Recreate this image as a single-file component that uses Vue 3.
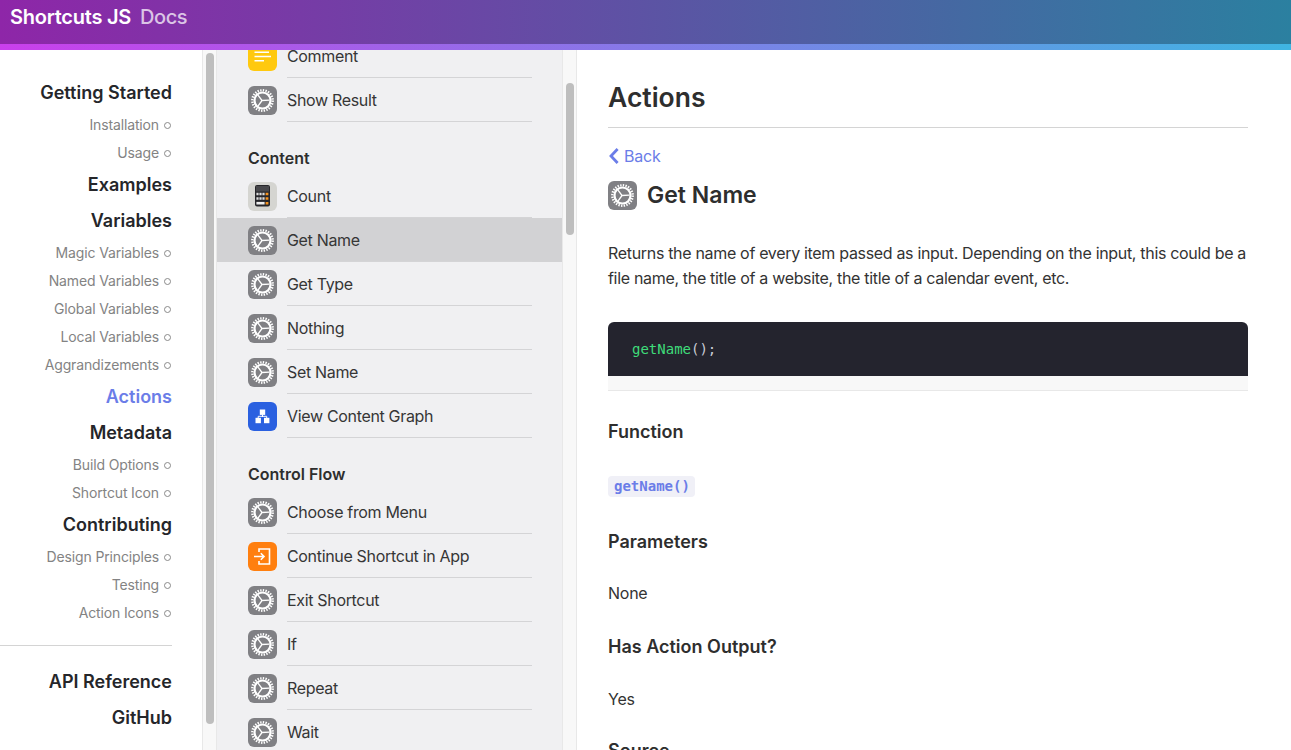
<script setup>
const top = [
  { name: 'Comment', icon: 'comment' },
  { name: 'Show Result', icon: 'gear' }
]
const groups = [
  { title: 'Content', items: [
    { name: 'Count', icon: 'calc' },
    { name: 'Get Name', icon: 'gear', active: true },
    { name: 'Get Type', icon: 'gear' },
    { name: 'Nothing', icon: 'gear' },
    { name: 'Set Name', icon: 'gear' },
    { name: 'View Content Graph', icon: 'graph' }
  ] },
  { title: 'Control Flow', items: [
    { name: 'Choose from Menu', icon: 'gear' },
    { name: 'Continue Shortcut in App', icon: 'exit' },
    { name: 'Exit Shortcut', icon: 'gear' },
    { name: 'If', icon: 'gear' },
    { name: 'Repeat', icon: 'gear' },
    { name: 'Wait', icon: 'gear' }
  ] }
]
const nav = [
  { head: 'Getting Started', subs: ['Installation', 'Usage'] },
  { head: 'Examples', subs: [] },
  { head: 'Variables', subs: ['Magic Variables', 'Named Variables', 'Global Variables', 'Local Variables', 'Aggrandizements'] },
  { head: 'Actions', subs: [], active: true },
  { head: 'Metadata', subs: ['Build Options', 'Shortcut Icon'] },
  { head: 'Contributing', subs: ['Design Principles', 'Testing', 'Action Icons'] }
]
const spokes = 'M21.5 14.2L14 14.5L9.8 8.8M14 14.5L9.8 20.4'
</script>

<template>
  <div class="page">
    <header class="bar">
      <span class="brand">Shortcuts JS</span>
      <span class="docs">Docs</span>
    </header>
    <div class="cols">
      <aside class="side">
        <nav class="nav">
          <div v-for="g in nav" :key="g.head" class="nav-group">
            <a class="nav-head" :class="{ on: g.active }">{{ g.head }}</a>
            <ul v-if="g.subs.length" class="subs">
              <li v-for="s in g.subs" :key="s" class="sub">{{ s }}<i class="ring"></i></li>
            </ul>
          </div>
          <hr class="nav-rule" />
          <a class="nav-head">API Reference</a>
          <a class="nav-head">GitHub</a>
        </nav>
      </aside>
      <div class="track"><div class="thumb thumb-a"></div></div>
      <section class="list">
        <div class="list-inner">
          <div v-for="it in top" :key="it.name" class="row">
            <svg class="ico" viewBox="0 0 29 29">
              <template v-if="it.icon === 'comment'">
                <rect width="29" height="29" rx="6" fill="#ffc90f" />
                <path d="M6.5 10.3H21M6.5 14.5H23M6.5 18.7H16" stroke="#fff" stroke-width="1.6" fill="none" />
              </template>
              <template v-else>
                <rect width="29" height="29" rx="6" fill="#808084" />
                <circle cx="14.5" cy="14.5" r="10.2" fill="none" stroke="#fff" stroke-width="2.4" stroke-dasharray="1.4 1.27" />
                <circle cx="14.5" cy="14.5" r="8" fill="none" stroke="#fff" stroke-width="2.2" />
                <path :d="spokes" stroke="#fff" stroke-width="1.3" fill="none" />
              </template>
            </svg>
            <span class="row-label">{{ it.name }}</span>
          </div>
          <div v-for="g in groups" :key="g.title" class="group">
            <h4 class="group-title">{{ g.title }}</h4>
            <div v-for="it in g.items" :key="it.name" class="row" :class="{ sel: it.active }">
              <svg class="ico" viewBox="0 0 29 29">
                <template v-if="it.icon === 'gear'">
                  <rect width="29" height="29" rx="6" fill="#808084" />
                  <circle cx="14.5" cy="14.5" r="10.2" fill="none" stroke="#fff" stroke-width="2.4" stroke-dasharray="1.4 1.27" />
                  <circle cx="14.5" cy="14.5" r="8" fill="none" stroke="#fff" stroke-width="2.2" />
                  <path :d="spokes" stroke="#fff" stroke-width="1.3" fill="none" />
                </template>
                <template v-else-if="it.icon === 'calc'">
                  <rect width="29" height="29" rx="6" fill="#d5d5d1" />
                  <rect x="7" y="3" width="15" height="21.5" rx="2" fill="#26262a" />
                  <rect x="8" y="4" width="13" height="5.5" fill="#46464a" />
                  <path d="M8.4 12h2.2M11.4 12h2.2M14.4 12h2.2M8.4 16.5h2.2M11.4 16.5h2.2M14.4 16.5h2.2" stroke="#ddd" stroke-width="2.6" />
                  <path d="M8.4 21.2h8.2" stroke="#f0f0f0" stroke-width="2.6" />
                  <path d="M17.6 12h2.8M17.6 16.5h2.8M17.6 21.2h2.8" stroke="#f5921e" stroke-width="2.6" />
                </template>
                <template v-else-if="it.icon === 'graph'">
                  <rect width="29" height="29" rx="6" fill="#2a60e0" />
                  <rect x="11.8" y="7.5" width="5.4" height="5.4" fill="#fff" />
                  <rect x="7.5" y="15.8" width="5.4" height="5.4" fill="#fff" />
                  <rect x="16" y="15.8" width="5.4" height="5.4" fill="#fff" />
                  <path d="M14.5 12.5V15M10.2 16V14.3H18.7V16" stroke="#fff" stroke-width="1" fill="none" />
                </template>
                <template v-else>
                  <rect width="29" height="29" rx="6" fill="#ff7f0f" />
                  <path d="M11 10V7H21.5V22H11V19" stroke="#fff" stroke-width="1.6" fill="none" />
                  <path d="M6 14.5H16M12.8 11.3L16 14.5L12.8 17.7" stroke="#fff" stroke-width="1.6" fill="none" />
                </template>
              </svg>
              <span class="row-label">{{ it.name }}</span>
            </div>
          </div>
        </div>
      </section>
      <div class="track"><div class="thumb thumb-b"></div></div>
      <main class="main">
        <h1 class="title">Actions</h1>
        <a class="back">
          <svg class="chev" viewBox="0 0 12 18"><path d="M9.6 2L3 9L9.6 16" fill="none" stroke="#6b7de8" stroke-width="2.8" /></svg>
          Back
        </a>
        <div class="name">
          <svg class="ico" viewBox="0 0 29 29">
            <rect width="29" height="29" rx="6" fill="#808084" />
            <circle cx="14.5" cy="14.5" r="10.2" fill="none" stroke="#fff" stroke-width="2.4" stroke-dasharray="1.4 1.27" />
            <circle cx="14.5" cy="14.5" r="8" fill="none" stroke="#fff" stroke-width="2.2" />
            <path :d="spokes" stroke="#fff" stroke-width="1.3" fill="none" />
          </svg>
          <h2 class="name-text">Get Name</h2>
        </div>
        <p class="desc">Returns the name of every item passed as input. Depending on the input, this could be a file name, the title of a website, the title of a calendar event, etc.</p>
        <div class="code"><pre class="pre"><span class="fn">getName</span>();</pre></div>
        <div class="code-scroll"></div>
        <h3 class="h3 h-fn">Function</h3>
        <code class="sig">getName()</code>
        <h3 class="h3 h-par">Parameters</h3>
        <p class="val v-none">None</p>
        <h3 class="h3 h-out">Has Action Output?</h3>
        <p class="val v-yes">Yes</p>
        <h3 class="h3 h-src">Source</h3>
      </main>
    </div>
  </div>
</template>

<style>
html, body { margin: 0; height: 100%; overflow: hidden; background: #fff; }
</style>

<style scoped>
.page {
  width: 1291px;
  height: 750px;
  display: flex;
  flex-direction: column;
  overflow: hidden;
  font-family: Inter, "Liberation Sans", sans-serif;
  color: #2e2e2e;
}
.bar {
  flex: none;
  height: 44px;
  padding: 0 10px;
  display: flex;
  align-items: flex-start;
  gap: 9px;
  background: linear-gradient(90deg, #8e26a8 0%, #2b80a0 100%);
  border-bottom: 6px solid;
  border-image: linear-gradient(90deg, #ca3fec 0%, #3fb5e2 100%) 1;
}
.brand { font-size: 20px; font-weight: 600; line-height: 34px; color: #fff; letter-spacing: -.25px; }
.docs { font-size: 20px; font-weight: 500; line-height: 34px; color: rgba(255, 255, 255, .72); letter-spacing: -.4px; }
.cols { flex: 1; min-height: 0; display: flex; }
.side { flex: none; width: 202px; background: #fff; box-sizing: border-box; padding: 24px 30px 0 0; }
.nav { display: flex; flex-direction: column; align-items: stretch; text-align: right; }
.nav-group { display: flex; flex-direction: column; }
.nav-head { display: block; height: 36px; line-height: 38px; font-size: 18px; font-weight: 600; color: #25262a; white-space: nowrap; }
.nav-head.on { color: #6b7de8; }
.subs { list-style: none; margin: 1px 0 -1px; padding: 0; }
.sub { height: 28px; line-height: 28px; font-size: 14px; letter-spacing: -.14px; color: #838383; display: flex; justify-content: flex-end; align-items: center; white-space: nowrap; }
.ring { width: 7px; height: 7px; box-sizing: border-box; border: 1px solid #8a8a8a; border-radius: 50%; margin: 0 1px 0 5px; }
.nav-rule { border: 0; border-top: 1px solid #d4d4d4; margin: 19px 0 17px; width: 172px; align-self: flex-end; }
.track { flex: none; width: 13px; background: #f8f8f8; border-left: 1px solid #e8e8e8; border-right: 1px solid #e8e8e8; position: relative; }
.thumb { position: absolute; left: 3px; width: 8px; background: #bebebe; border-radius: 4px; }
.thumb-a { top: 3px; height: 671px; }
.thumb-b { top: 33px; height: 152px; }
.list { flex: none; width: 345px; background: #f0f0f2; overflow: hidden; }
.list-inner { margin-top: -16px; }
.row { height: 44px; display: flex; align-items: center; padding-left: 31px; position: relative; }
.row::after { content: ""; position: absolute; left: 70px; right: 30px; bottom: 0; height: 1px; background: #d4d4d6; }
.row.sel { background: #d2d2d4; }
.row-label { margin-left: 10px; font-size: 16px; letter-spacing: -.33px; color: #363636; white-space: nowrap; }
.ico { width: 29px; height: 29px; flex: none; display: block; }
.group-title { margin: 0; padding: 27px 0 6px 31px; height: 19px; line-height: 19px; font-size: 16px; font-weight: 600; color: #2e2e2e; }
.main { flex: 1; min-width: 0; padding: 0 43px 0 31px; overflow: hidden; background: #fff; }
.title { margin: 0; height: 78px; line-height: 94px; box-sizing: border-box; font-size: 26.5px; font-weight: 600; color: #2e2e2e; border-bottom: 1px solid #d4d4d4; }
.back { display: flex; align-items: center; margin-top: 16px; height: 24px; font-size: 16px; color: #6b7de8; gap: 4px; letter-spacing: -.2px; }
.chev { width: 12px; height: 18px; }
.name { display: flex; align-items: center; gap: 10px; margin-top: 13px; }
.name-text { margin: 0; font-size: 23px; font-weight: 600; line-height: 29px; color: #2e2e2e; }
.desc { margin: 31px 0 0; font-size: 16px; line-height: 25px; letter-spacing: -.32px; color: #333; }
.code { margin-top: 31px; height: 54px; background: #24242e; border-radius: 6px 6px 0 0; box-sizing: border-box; padding: 0 24px; }
.pre { margin: 0; line-height: 55px; font-family: "DejaVu Sans Mono", monospace; font-size: 14px; color: #c9cdd6; }
.fn { color: #3fdc7a; }
.code-scroll { height: 14px; background: #f8f8f8; border-bottom: 1px solid #e8e8e8; }
.h3 { margin: 0; font-size: 18px; font-weight: 600; line-height: 22px; color: #2e2e2e; }
.h-fn { margin-top: 30px; }
.sig { display: inline-block; margin-top: 33px; height: 21px; line-height: 21px; padding: 0 5px 0 6px; border-radius: 4px; background: #f0f0f7; color: #6b7de8; font-family: "DejaVu Sans Mono", monospace; font-size: 14px; font-weight: 700; }
.h-par { margin-top: 34px; }
.val { margin: 0; font-size: 16px; line-height: 24px; letter-spacing: -.25px; color: #333; }
.v-none { margin-top: 28px; }
.h-out { margin-top: 31px; }
.v-yes { margin-top: 29px; }
.h-src { margin-top: 29px; }
</style>
